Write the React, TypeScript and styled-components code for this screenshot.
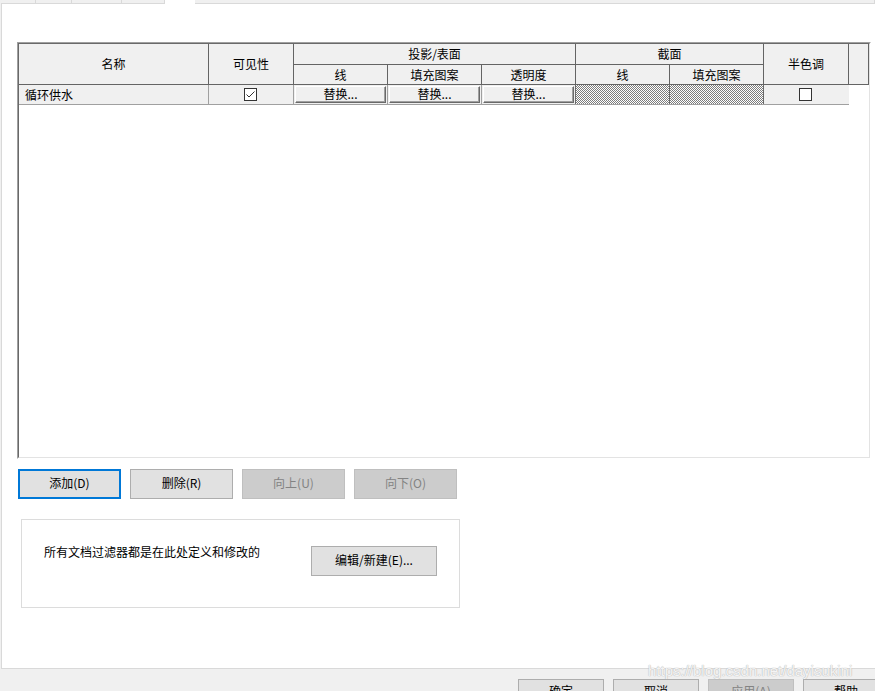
import styled, { createGlobalStyle } from "styled-components";

const GlobalStyle = createGlobalStyle`
    html, body {
        margin: 0;
        padding: 0;
        background: #f0f0f0;
    }
    * {
        box-sizing: border-box;
    }
`;

const Window = styled.div`
    position: relative;
    width: 875px;
    height: 691px;
    overflow: hidden;
    display: flex;
    flex-direction: column;
    background: #f0f0f0;
    font-family: "Noto Sans CJK SC", "Noto Sans", sans-serif;
    font-size: 12px;
    color: #000;
`;

const TabStrip = styled.div`
    display: flex;
    height: 4px;
    margin-left: 1px;
    flex-shrink: 0;
`;

const Tab = styled.div<{ w: number; selected?: boolean; grow?: boolean }>`
    width: ${(p) => p.w}px;
    flex: ${(p) => (p.grow ? 1 : "none")};
    height: 4px;
    background: ${(p) => (p.selected ? "#fff" : "#f0f0f0")};
    border-right: 1px solid ${(p) => (p.selected ? "transparent" : "#d9d9d9")};
    border-bottom: 1px solid ${(p) => (p.selected ? "#fff" : "#d9d9d9")};
`;

const Panel = styled.div`
    height: 665px;
    margin-left: 1px;
    width: 880px;
    flex-shrink: 0;
    background: #fff;
    border-left: 1px solid #d9d9d9;
    border-bottom: 1px solid #d9d9d9;
    padding: 38px 0 0 15px;
    display: flex;
    flex-direction: column;
`;

const GridOuter = styled.div`
    width: 854px;
    height: 417px;
    border: 1px solid;
    border-color: #a0a0a0 #fff #fff #a0a0a0;
`;

const GridInner = styled.div`
    height: 100%;
    border: 1px solid;
    border-color: #696969 #e3e3e3 #e3e3e3 #696969;
    background: #fff;
`;

const HeaderGrid = styled.div`
    display: grid;
    grid-template-columns: 190px 85px 94px 94px 94px 94px 94px 85px 1fr;
    grid-template-rows: 21px 20px;
    background: #f0f0f0;
`;

const HeadCell = styled.div<{ col: string; row: string }>`
    grid-column: ${(p) => p.col};
    grid-row: ${(p) => p.row};
    display: flex;
    align-items: center;
    justify-content: center;
    border-right: 1px solid #646464;
    border-bottom: 1px solid #646464;
    line-height: 14px;
    white-space: nowrap;
`;

const DataRow = styled.div`
    display: grid;
    grid-template-columns: 190px 85px 94px 94px 94px 94px 94px 85px;
    height: 20px;
    width: 830px;
    background: #f0f0f0;
    border-bottom: 1px solid #a0a0a0;
`;

const DataCell = styled.div<{ hatched?: boolean; dark?: boolean }>`
    display: flex;
    align-items: center;
    justify-content: center;
    border-right: 1px solid ${(p) => (p.dark ? "#696969" : "#a0a0a0")};
    line-height: 14px;
    white-space: nowrap;
    background-color: ${(p) => (p.hatched ? "#fff" : "transparent")};
    background-image: ${(p) =>
        p.hatched
            ? "repeating-conic-gradient(#7d7d7d 0 25%, #ffffff 0 50%)"
            : "none"};
    background-size: 2px 2px;

    &:last-child {
        border-right: none;
    }
`;

const NameCell = styled(DataCell)`
    justify-content: flex-start;
    padding-left: 6px;
`;

const ButtonCell = styled(DataCell)`
    align-items: flex-start;
    justify-content: flex-start;
`;

const OverrideButton = styled.button`
    width: 91px;
    height: 17px;
    margin: 1px 0 0 1px;
    padding: 0 0 1px;
    background: #f0f0f0;
    border: 1px solid;
    border-color: #fff #696969 #696969 #fff;
    box-shadow: inset -1px -1px 0 #a0a0a0;
    font-family: inherit;
    font-size: 12px;
    line-height: 14px;
    color: #000;
`;

const Check = styled.div`
    width: 13px;
    height: 13px;
    border: 1px solid #333;
    background: #fff;
    display: flex;
    align-items: center;
    justify-content: center;
    margin-left: -2px;
`;

const ButtonRow = styled.div`
    display: flex;
    gap: 9px;
    margin: 10px 0 0 1px;
`;

const Button = styled.button<{ focused?: boolean; disabled?: boolean }>`
    width: 103px;
    height: 30px;
    padding: 0 0 3px;
    font-family: inherit;
    font-size: 12px;
    line-height: 14px;
    background: ${(p) => (p.disabled ? "#cccccc" : "#e1e1e1")};
    color: ${(p) => (p.disabled ? "#838383" : "#000")};
    border: ${(p) =>
        p.focused
            ? "2px solid #0078d7"
            : p.disabled
            ? "1px solid #bfbfbf"
            : "1px solid #adadad"};
`;

const GroupBox = styled.div`
    width: 439px;
    height: 89px;
    margin: 20px 0 0 4px;
    border: 1px solid #dcdcdc;
    padding: 25px 0 0 22px;
    display: flex;
    align-items: flex-start;
`;

const Note = styled.span`
    width: 267px;
    line-height: 14px;
`;

const EditButton = styled(Button)`
    width: 126px;
    margin-top: 1px;
`;

const Footer = styled.div`
    display: flex;
    gap: 9px;
    padding: 10px 0 0 518px;
`;

const FooterButton = styled(Button)`
    width: 86px;
    flex-shrink: 0;
    padding: 0 0 6px;
`;

const Watermark = styled.div`
    position: absolute;
    left: 648px;
    top: 662px;
    font-family: "Liberation Sans", Arial, sans-serif;
    font-size: 15px;
    color: rgba(255, 255, 255, 0.85);
    text-shadow: 0 0 1px #b8b8b8, 0 0 1px #b8b8b8;
    white-space: nowrap;
`;

const CheckMark = () => (
    <svg width="11" height="11" viewBox="0 0 11 11">
        <path d="M1.5 5.5 L4 8 L9.5 2.5" fill="none" stroke="#333" strokeWidth="1" />
    </svg>
);

const tabs = [35, 36, 50, 43];

export default function App() {
    return (
        <Window>
            <GlobalStyle />
            <TabStrip>
                {tabs.map((w, i) => (
                    <Tab key={i} w={w} />
                ))}
                <Tab w={30} selected />
                <Tab w={0} grow />
            </TabStrip>
            <Panel>
                <GridOuter>
                    <GridInner>
                        <HeaderGrid>
                            <HeadCell col="1" row="1 / 3">名称</HeadCell>
                            <HeadCell col="2" row="1 / 3">可见性</HeadCell>
                            <HeadCell col="3 / 6" row="1">投影/表面</HeadCell>
                            <HeadCell col="6 / 8" row="1">截面</HeadCell>
                            <HeadCell col="8" row="1 / 3">半色调</HeadCell>
                            <HeadCell col="9" row="1 / 3" />
                            <HeadCell col="3" row="2">线</HeadCell>
                            <HeadCell col="4" row="2">填充图案</HeadCell>
                            <HeadCell col="5" row="2">透明度</HeadCell>
                            <HeadCell col="6" row="2">线</HeadCell>
                            <HeadCell col="7" row="2">填充图案</HeadCell>
                        </HeaderGrid>
                        <DataRow>
                            <NameCell>循环供水</NameCell>
                            <DataCell>
                                <Check>
                                    <CheckMark />
                                </Check>
                            </DataCell>
                            <ButtonCell>
                                <OverrideButton>替换...</OverrideButton>
                            </ButtonCell>
                            <ButtonCell>
                                <OverrideButton>替换...</OverrideButton>
                            </ButtonCell>
                            <ButtonCell dark>
                                <OverrideButton>替换...</OverrideButton>
                            </ButtonCell>
                            <DataCell hatched dark />
                            <DataCell hatched dark />
                            <DataCell>
                                <Check />
                            </DataCell>
                        </DataRow>
                    </GridInner>
                </GridOuter>
                <ButtonRow>
                    <Button focused>添加(D)</Button>
                    <Button>删除(R)</Button>
                    <Button disabled>向上(U)</Button>
                    <Button disabled>向下(O)</Button>
                </ButtonRow>
                <GroupBox>
                    <Note>所有文档过滤器都是在此处定义和修改的</Note>
                    <EditButton>编辑/新建(E)...</EditButton>
                </GroupBox>
            </Panel>
            <Footer>
                <FooterButton>确定</FooterButton>
                <FooterButton>取消</FooterButton>
                <FooterButton disabled>应用(A)</FooterButton>
                <FooterButton>帮助</FooterButton>
            </Footer>
            <Watermark>https://blog.csdn.net/dayisukini</Watermark>
        </Window>
    );
}
